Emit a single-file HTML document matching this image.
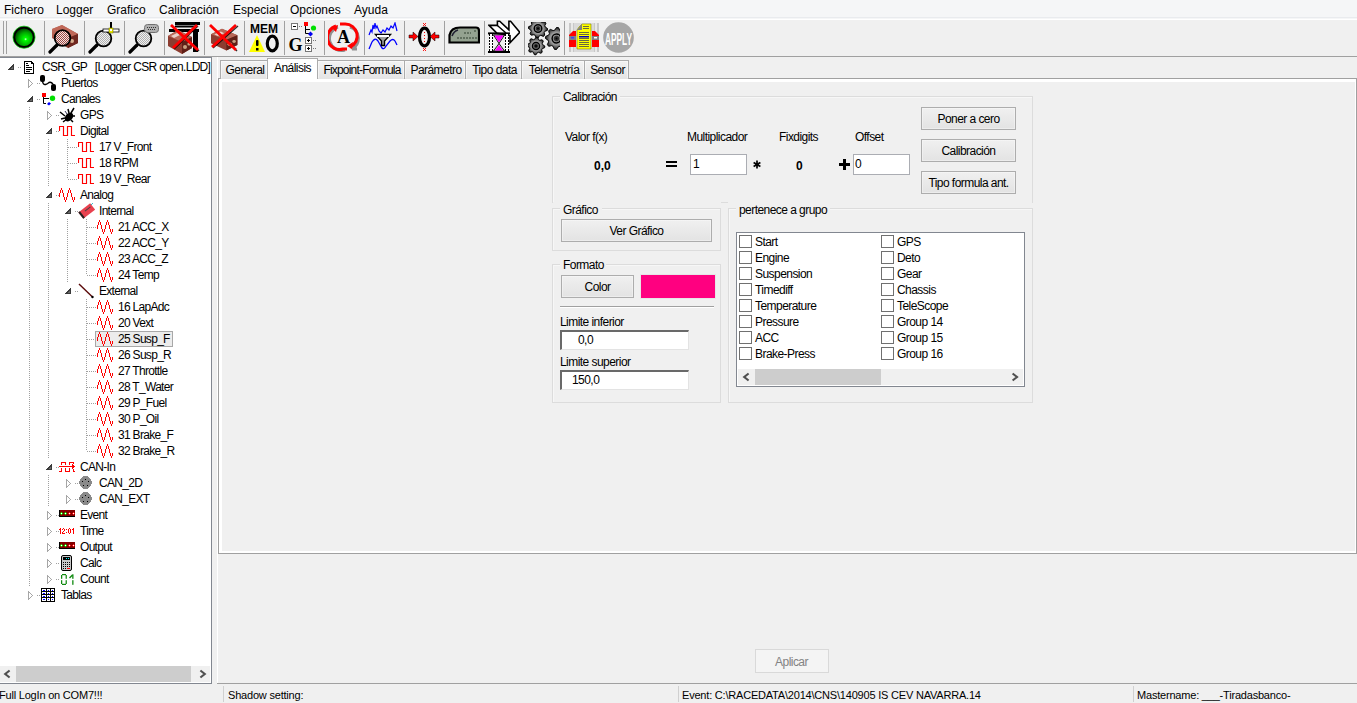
<!DOCTYPE html><html><head><meta charset="utf-8"><style>
html,body{margin:0;padding:0;}
body{width:1357px;height:703px;overflow:hidden;position:relative;background:#f0f0f0;font-family:'Liberation Sans', sans-serif;font-size:11px;color:#000;}
div,svg{position:absolute;box-sizing:border-box;}
.t{white-space:pre;line-height:13px;letter-spacing:-0.2px;}
.tt{white-space:pre;line-height:13px;font-size:12px;letter-spacing:-0.55px;}
.tr{white-space:pre;line-height:13px;font-size:12px;letter-spacing:-0.7px;}
.m{white-space:pre;line-height:14px;font-size:12px;}
.st{white-space:pre;line-height:13px;font-size:11px;letter-spacing:-0.2px;}
</style></head><body>
<div style="left:0px;top:0px;width:1357px;height:19px;background:#f5f6f7;"></div>
<div style="left:0px;top:17px;width:1357px;height:1px;background:#e9ebee;"></div>
<div style="left:0px;top:18px;width:1357px;height:1px;background:#f5f6f7;"></div>
<div style="left:0px;top:19px;width:1357px;height:1px;background:#ffffff;"></div>
<div class="m" style="left:4px;top:3px;">Fichero</div>
<div class="m" style="left:56px;top:3px;">Logger</div>
<div class="m" style="left:107px;top:3px;">Grafico</div>
<div class="m" style="left:159px;top:3px;">Calibración</div>
<div class="m" style="left:233px;top:3px;">Especial</div>
<div class="m" style="left:290px;top:3px;">Opciones</div>
<div class="m" style="left:354px;top:3px;">Ayuda</div>
<div style="left:0px;top:20px;width:1357px;height:36px;background:#f0f0f0;"></div>
<div style="left:0px;top:56px;width:1357px;height:1px;background:#a0a0a0;"></div>
<div style="left:3px;top:21px;width:1px;height:33px;background:#a0a0a0;"></div>
<div style="left:6px;top:21px;width:1px;height:33px;background:#a0a0a0;"></div>
<div style="left:44px;top:21px;width:1px;height:34px;background:#a0a0a0;"></div>
<div style="left:84px;top:21px;width:1px;height:34px;background:#a0a0a0;"></div>
<div style="left:124px;top:21px;width:1px;height:34px;background:#a0a0a0;"></div>
<div style="left:164px;top:21px;width:1px;height:34px;background:#a0a0a0;"></div>
<div style="left:204px;top:21px;width:1px;height:34px;background:#a0a0a0;"></div>
<div style="left:244px;top:21px;width:1px;height:34px;background:#a0a0a0;"></div>
<div style="left:284px;top:21px;width:1px;height:34px;background:#a0a0a0;"></div>
<div style="left:324px;top:21px;width:1px;height:34px;background:#a0a0a0;"></div>
<div style="left:364px;top:21px;width:1px;height:34px;background:#a0a0a0;"></div>
<div style="left:404px;top:21px;width:1px;height:34px;background:#a0a0a0;"></div>
<div style="left:444px;top:21px;width:1px;height:34px;background:#a0a0a0;"></div>
<div style="left:484px;top:21px;width:1px;height:34px;background:#a0a0a0;"></div>
<div style="left:524px;top:21px;width:1px;height:34px;background:#a0a0a0;"></div>
<div style="left:564px;top:21px;width:1px;height:34px;background:#a0a0a0;"></div>
<svg style="left:0;top:0" width="0" height="0"><defs>
<radialGradient id="gled" cx="0.58" cy="0.6" r="0.62"><stop offset="0" stop-color="#e0ffe0"/><stop offset="0.12" stop-color="#00ff00"/><stop offset="0.55" stop-color="#00a800"/><stop offset="1" stop-color="#002800"/></radialGradient>
<pattern id="hatch" width="2" height="2" patternUnits="userSpaceOnUse"><rect width="2" height="2" fill="#f0f0f0"/><rect width="1" height="1" fill="#b0b0b0"/><rect x="1" y="1" width="1" height="1" fill="#b0b0b0"/></pattern>
<pattern id="hatchb" width="2" height="2" patternUnits="userSpaceOnUse"><rect width="2" height="2" fill="#f0e8e8"/><rect width="1" height="1" fill="#a04840"/><rect x="1" y="1" width="1" height="1" fill="#a04840"/></pattern>
<linearGradient id="brown" x1="0" y1="0" x2="1" y2="1"><stop offset="0" stop-color="#c87868"/><stop offset="0.5" stop-color="#a04838"/><stop offset="1" stop-color="#602018"/></linearGradient>
<radialGradient id="gear" cx="0.5" cy="0.5" r="0.5"><stop offset="0.2" stop-color="#303030"/><stop offset="0.35" stop-color="#c0c0c0"/><stop offset="0.6" stop-color="#909090"/><stop offset="1" stop-color="#202020"/></radialGradient>
</defs></svg>
<svg style="left:8px;top:22px" width="32" height="34" viewBox="0 0 32 34"><circle cx="16" cy="15.2" r="9.9" fill="url(#gled)" stroke="#000" stroke-width="2.2"/><circle cx="16" cy="15.2" r="11.1" fill="none" stroke="#00d000" stroke-width="0.7"/></svg>
<svg style="left:48px;top:22px" width="32" height="34" viewBox="0 0 32 34"><path d="M4 7 L14 3 L30 12 L30 21 L20 26 L4 16 Z" fill="url(#brown)"/><path d="M4 7 L14 3 L30 12 L20 16 Z" fill="#c06858"/><path d="M20 16 L30 12 L30 21 L20 26 Z" fill="#702820"/><circle cx="24" cy="19" r="2" fill="#d8b090"/><path d="M2 30 L9 23" stroke="#000" stroke-width="3.2" stroke-linecap="round"/><circle cx="14.5" cy="16" r="7.8" fill="url(#hatchb)" stroke="#000" stroke-width="1.8"/></svg>
<svg style="left:88px;top:22px" width="32" height="34" viewBox="0 0 32 34"><path d="M2 30 L9 23" stroke="#000" stroke-width="3.2" stroke-linecap="round"/><circle cx="15.5" cy="16.5" r="7.8" fill="url(#hatch)" stroke="#000" stroke-width="1.8"/><rect x="22" y="-1" width="2" height="10" fill="#000"/><rect x="15" y="7" width="16" height="3" fill="#fff" stroke="#000" stroke-width="0.8"/><rect x="21" y="6" width="4" height="5" fill="#e8e800" stroke="#808000" stroke-width="0.6"/><rect x="22" y="7" width="2" height="2" fill="#fff"/></svg>
<svg style="left:128px;top:22px" width="32" height="34" viewBox="0 0 32 34"><path d="M2 30 L9 23" stroke="#000" stroke-width="3.2" stroke-linecap="round"/><circle cx="15.5" cy="16.5" r="7.8" fill="url(#hatch)" stroke="#000" stroke-width="1.8"/><rect x="16.5" y="2.5" width="14" height="8" rx="3" fill="#b0b0b0" stroke="#707070"/><g fill="#333"><rect x="19" y="5" width="1" height="1"/><rect x="21" y="5" width="1" height="1"/><rect x="23" y="5" width="1" height="1"/><rect x="25" y="5" width="1" height="1"/><rect x="27" y="5" width="1" height="1"/><rect x="20" y="7" width="1" height="1"/><rect x="22" y="7" width="1" height="1"/><rect x="24" y="7" width="1" height="1"/><rect x="26" y="7" width="1" height="1"/></g></svg>
<svg style="left:168px;top:22px" width="32" height="34" viewBox="0 0 32 34"><rect x="7" y="-1" width="25" height="4" fill="#000"/><rect x="7" y="3.5" width="22" height="2" fill="#000"/><rect x="1" y="7" width="30" height="3" fill="#000"/><rect x="25" y="7" width="5" height="23" fill="#000"/><g transform="translate(0 6) scale(1.0)"><path d="M0 8 L10 2 L24 9 L24 20 L14 26 L0 18 Z" fill="#8c3c30"/><path d="M0 8 L10 2 L24 9 L14 14 Z" fill="#b86858"/><path d="M14 14 L24 9 L24 20 L14 26 Z" fill="#602018"/><path d="M3 8 L9 5 L12 7 L6 10 Z" fill="#e8d0c8"/><circle cx="17" cy="19" r="2" fill="#c8a080"/><circle cx="21" cy="16" r="1.6" fill="#c8a080"/></g><path d="M4 4 L31 29 M30 4 L6 27" stroke="#000" stroke-width="1.5" opacity="0.8"/><path d="M3 3 L30 28 M29 3 L5 26" stroke="#ff0000" stroke-width="2.8"/></svg>
<svg style="left:208px;top:22px" width="32" height="34" viewBox="0 0 32 34"><g transform="translate(0 -1.5) scale(1 0.82)"><g transform="translate(3 8) scale(1.1)"><path d="M0 8 L10 2 L24 9 L24 20 L14 26 L0 18 Z" fill="#8c3c30"/><path d="M0 8 L10 2 L24 9 L14 14 Z" fill="#b86858"/><path d="M14 14 L24 9 L24 20 L14 26 Z" fill="#602018"/><path d="M3 8 L9 5 L12 7 L6 10 Z" fill="#e8d0c8"/><circle cx="17" cy="19" r="2" fill="#c8a080"/><circle cx="21" cy="16" r="1.6" fill="#c8a080"/></g></g><path d="M3 4 L29 29 M30 4 L5 26" stroke="#000" stroke-width="1.5" opacity="0.8"/><path d="M2 3 L28 28 M28 3 L4 25" stroke="#ff0000" stroke-width="2.8"/></svg>
<svg style="left:248px;top:22px" width="32" height="34" viewBox="0 0 32 34"><text x="16" y="11" font-family="Liberation Sans" font-weight="bold" font-size="13.5" text-anchor="middle" textLength="28" lengthAdjust="spacingAndGlyphs">MEM</text><path d="M9 13 L17 30 L1 30 Z" fill="#ffff00"/><rect x="8" y="18" width="2.5" height="6" rx="1" fill="#000"/><rect x="8" y="26" width="2.5" height="2.5" fill="#000"/><ellipse cx="24.3" cy="21.5" rx="5" ry="7.3" fill="none" stroke="#000" stroke-width="3.2"/></svg>
<svg style="left:288px;top:22px" width="32" height="34" viewBox="0 0 32 34"><rect x="3.5" y="1.5" width="6" height="6" fill="#fff" stroke="#777"/><rect x="5" y="4" width="3" height="1" fill="#000"/><g fill="#777"><rect x="11" y="4" width="1" height="1"/><rect x="13" y="4" width="1" height="1"/></g><rect x="16" y="0" width="4" height="4" fill="#f00"/><path d="M17.5 4 V11.5 H22 M17.5 7.5 H22" stroke="#000" fill="none"/><circle cx="25.5" cy="6" r="2.6" fill="#00e000"/><path d="M20 12 L22.5 9.5 L25 12 L22.5 14.5 Z" fill="#0000f0"/><text x="0.5" y="29" font-family="Liberation Serif" font-weight="bold" font-size="19" textLength="14" lengthAdjust="spacingAndGlyphs">G</text><rect x="17.5" y="15.5" width="6" height="6" fill="#fff" stroke="#777"/><rect x="19" y="18" width="3" height="1" fill="#000"/><rect x="20" y="17" width="1" height="3" fill="#000"/><rect x="17.5" y="23.5" width="6" height="6" fill="#fff" stroke="#777"/><rect x="19" y="26" width="3" height="1" fill="#000"/><rect x="20" y="25" width="1" height="3" fill="#000"/><g fill="#777"><rect x="25" y="18" width="1" height="1"/><rect x="27" y="18" width="1" height="1"/><rect x="25" y="26" width="1" height="1"/><rect x="27" y="26" width="1" height="1"/></g></svg>
<svg style="left:328px;top:22px" width="32" height="34" viewBox="0 0 32 34"><path d="M10 5 A12 12 0 0 0 17 28" fill="none" stroke="#909090" stroke-width="3"/><path d="M22 5 A12 12 0 0 1 24 27 L29 27" fill="none" stroke="#909090" stroke-width="3"/><path d="M8 4 A12 12 0 0 0 15 27 L19 27" fill="none" stroke="#ff0000" stroke-width="3"/><path d="M3 5 L10 3 L8 10 Z" fill="#ff0000"/><path d="M12 2 L17 2 A12 12 0 0 1 22 25" fill="none" stroke="#ff0000" stroke-width="3"/><path d="M19 24 L24 27 L25 20 Z" fill="#ff0000"/><text x="15.5" y="21" font-family="Liberation Serif" font-weight="bold" font-size="18" text-anchor="middle">A</text></svg>
<svg style="left:368px;top:22px" width="32" height="34" viewBox="0 0 32 34"><path d="M1 13 L3 8 L4 10 L5 3 L6 7 L7 1 L8 6 L9 4 L11 9 L13 11 L15 8 L17 10 L19 6 L21 8 L23 4 L25 6 L27 1 L29 9" fill="none" stroke="#0000ff" stroke-width="1.2"/><path d="M1 27 L4 20 Q7 15 10 19 L14 26 Q16 28 18 24 L22 19 Q25 16 27 19 L29 23" fill="none" stroke="#0000ff" stroke-width="1.3"/><path d="M7.5 12.5 H22.5 L16.5 19 V23.5 H13.5 V19 Z" fill="#a0a0a0" stroke="#000" stroke-width="1.4"/><rect x="9" y="13" width="12" height="2" fill="#fff"/></svg>
<svg style="left:408px;top:22px" width="32" height="34" viewBox="0 0 32 34"><ellipse cx="16.5" cy="15" rx="5" ry="8.8" fill="none" stroke="#000" stroke-width="3.2"/><g fill="#ff0000"><rect x="16" y="10" width="1" height="1"/><rect x="16" y="13" width="1" height="1"/><rect x="16" y="16" width="1" height="1"/><rect x="16" y="19" width="1" height="1"/><path d="M15 1 L18 4 M18 1 L15 4 M15 26 L18 29 M18 26 L15 29" stroke="#ff0000" stroke-width="0.9"/><path d="M1 13 H5 V10 L10 14.5 L5 19 V16 H1 Z"/><path d="M31 13 H27 V10 L22 14.5 L27 19 V16 H31 Z"/></g><path d="M1 13 H5 V10 L10 14.5 L5 19 V16 H1 Z M31 13 H27 V10 L22 14.5 L27 19 V16 H31 Z" fill="none" stroke="#000" stroke-width="0.5"/></svg>
<svg style="left:448px;top:22px" width="32" height="34" viewBox="0 0 32 34"><path d="M1.5 20.5 V13 Q3 5.5 12 5.5 H28 Q31 5.5 31 9 V20.5 Z" fill="#94a290" stroke="#000" stroke-width="2.2"/><path d="M4 14 Q6 9 10 8" fill="none" stroke="#223" stroke-width="1.6"/><path d="M9 16 H29 M16 11 H23 M26 9 H29" stroke="#50604f" stroke-width="1.6" stroke-dasharray="2 1"/></svg>
<svg style="left:488px;top:20px" width="32" height="36" viewBox="0 0 32 36"><path d="M1.1 5.4 H9.4 V1.2 H11.7 L20.9 9.8 V1.2 H22.6 L31.8 12.2 L22 22.8 V15.7 L9 13.3 Z" fill="#fff" stroke="#000" stroke-width="1.6" stroke-linejoin="miter"/><path d="M9.4 5.4 L18 13" stroke="#000" stroke-width="1.4"/><rect x="0" y="12.4" width="22" height="2" fill="#000"/><rect x="0" y="31" width="22" height="2" fill="#000"/><rect x="1" y="14" width="4" height="17" fill="#fff"/><rect x="17" y="14" width="4" height="17" fill="#fff"/><path d="M1.5 14 V31 M4.5 14 V31 M17.5 14 V31 M20.5 14 V31" stroke="#000" stroke-width="1" stroke-dasharray="2 1"/><path d="M5.5 15 H16.5 L11 23.5 L16.5 31 H5.5 L11 23.5 Z" fill="#d8d8d8" stroke="#000" stroke-width="0.9"/><path d="M6.5 15.5 H15.5 L11 22.5 Z" fill="#ff00ff"/><path d="M11 25 L15 30.5 H7 Z" fill="#ff00ff"/></svg>
<svg style="left:528px;top:22px" width="32" height="34" viewBox="0 0 32 34"><polygon points="19.5,6.5 19.3,8.4 16.8,9.3 16.2,10.6 16.7,13.2 15.3,14.4 12.8,13.3 11.4,13.8 10.0,16.0 8.1,15.8 7.2,13.3 5.9,12.7 3.3,13.2 2.1,11.8 3.2,9.3 2.7,7.9 0.5,6.5 0.7,4.6 3.2,3.7 3.8,2.4 3.3,-0.2 4.7,-1.4 7.2,-0.3 8.6,-0.8 10.0,-3.0 11.9,-2.8 12.8,-0.3 14.1,0.3 16.7,-0.2 17.9,1.2 16.8,3.7 17.3,5.1" fill="url(#gear)" stroke="#000" stroke-width="1"/><circle cx="10" cy="6.5" r="3.8" fill="none" stroke="#000" stroke-width="1.5"/><circle cx="10" cy="6.5" r="1" fill="#000"/><polygon points="16.8,24.0 16.6,25.7 14.3,26.6 13.7,27.8 14.2,30.2 12.9,31.3 10.6,30.3 9.3,30.7 8.0,32.8 6.3,32.6 5.4,30.3 4.2,29.7 1.8,30.2 0.7,28.9 1.7,26.6 1.3,25.3 -0.8,24.0 -0.6,22.3 1.7,21.4 2.3,20.2 1.8,17.8 3.1,16.7 5.4,17.7 6.7,17.3 8.0,15.2 9.7,15.4 10.6,17.7 11.8,18.3 14.2,17.8 15.3,19.1 14.3,21.4 14.7,22.7" fill="url(#gear)" stroke="#000" stroke-width="1"/><circle cx="8" cy="24" r="3.5" fill="none" stroke="#000" stroke-width="1.5"/><circle cx="8" cy="24" r="1" fill="#000"/><polygon points="39.5,16.5 39.3,18.6 36.4,19.8 35.6,21.3 36.3,24.3 34.6,25.6 31.8,24.4 30.2,24.9 28.5,27.5 26.4,27.3 25.2,24.4 23.7,23.6 20.7,24.3 19.4,22.6 20.6,19.8 20.1,18.2 17.5,16.5 17.7,14.4 20.6,13.2 21.4,11.7 20.7,8.7 22.4,7.4 25.2,8.6 26.8,8.1 28.5,5.5 30.6,5.7 31.8,8.6 33.3,9.4 36.3,8.7 37.6,10.4 36.4,13.2 36.9,14.8" fill="url(#gear)" stroke="#000" stroke-width="1"/><circle cx="28.5" cy="16.5" r="4.4" fill="none" stroke="#000" stroke-width="1.5"/><circle cx="28.5" cy="16.5" r="1" fill="#000"/></svg>
<svg style="left:568px;top:22px" width="32" height="34" viewBox="0 0 32 34"><rect x="1" y="1" width="30" height="29" fill="#c8c8c8"/><rect x="6" y="1" width="20" height="29" fill="#dadada"/><rect x="3" y="1" width="2" height="29" fill="#e8e8e8"/><rect x="27" y="1" width="2" height="29" fill="#e8e8e8"/><path d="M11 5 L14 2 H23 V27 H9 V8 Z" fill="#ffff00" stroke="#808000" stroke-width="0.6"/><path d="M9 8 L14 2 V8 Z" fill="#808080"/><g fill="#6a6a40"><rect x="15" y="4" width="6" height="1"/><rect x="15" y="6" width="6" height="1"/><rect x="11" y="10" width="10" height="1"/><rect x="11" y="12" width="10" height="1"/><rect x="11" y="16" width="10" height="1"/><rect x="11" y="18" width="10" height="1"/><rect x="11" y="20" width="10" height="1"/><rect x="11" y="22" width="10" height="1"/><rect x="11" y="24" width="10" height="1"/></g><rect x="11" y="14" width="10" height="1.5" fill="#0000c0"/><path d="M1 13 L5 9 H8 V25 H1 Z" fill="#ff0000"/><rect x="1" y="14" width="7" height="4" fill="#808080"/><rect x="3" y="15" width="3" height="1.5" fill="#4040ff"/><path d="M31 13 L27 9 H24 V25 H31 Z" fill="#ff0000"/><rect x="24" y="14" width="7" height="4" fill="#808080"/><rect x="26" y="15" width="3" height="1.5" fill="#fff"/></svg>
<svg style="left:602px;top:22px" width="34" height="34" viewBox="0 0 34 34"><circle cx="16.5" cy="15.5" r="15.3" fill="#a6a6a6"/><text x="16.5" y="22.5" font-family="Liberation Sans" font-weight="bold" font-size="16" fill="#fff" text-anchor="middle" textLength="27" lengthAdjust="spacingAndGlyphs">APPLY</text></svg>
<div style="left:0px;top:57px;width:212px;height:627px;background:#fff;border-top:1px solid #828790;border-right:1px solid #828790;border-bottom:1px solid #828790;"></div>
<div style="left:0;top:0;width:211px;height:683px;overflow:hidden">
<svg style="left:0;top:0" width="212" height="684"><path d="M67.5 139 V155 M67.5 155 V171 M67.5 171 V179 M86.5 219 V235 M86.5 235 V251 M86.5 251 V267 M86.5 267 V275 M86.5 299 V315 M86.5 315 V331 M86.5 331 V347 M86.5 347 V363 M86.5 363 V379 M86.5 379 V395 M86.5 395 V411 M86.5 411 V427 M86.5 427 V443 M86.5 443 V451 M29.5 107 V123 M29.5 123 V139 M29.5 139 V155 M48.5 139 V155 M29.5 155 V171 M48.5 155 V171 M29.5 171 V187 M48.5 171 V187 M29.5 187 V203 M29.5 203 V219 M48.5 203 V219 M29.5 219 V235 M48.5 219 V235 M67.5 219 V235 M29.5 235 V251 M48.5 235 V251 M67.5 235 V251 M29.5 251 V267 M48.5 251 V267 M67.5 251 V267 M29.5 267 V283 M48.5 267 V283 M67.5 267 V283 M29.5 283 V299 M48.5 283 V299 M29.5 299 V315 M48.5 299 V315 M29.5 315 V331 M48.5 315 V331 M29.5 331 V347 M48.5 331 V347 M29.5 347 V363 M48.5 347 V363 M29.5 363 V379 M48.5 363 V379 M29.5 379 V395 M48.5 379 V395 M29.5 395 V411 M48.5 395 V411 M29.5 411 V427 M48.5 411 V427 M29.5 427 V443 M48.5 427 V443 M29.5 443 V459 M48.5 443 V459 M29.5 459 V475 M29.5 475 V491 M48.5 475 V491 M29.5 491 V507 M48.5 491 V507 M29.5 507 V523 M29.5 523 V539 M29.5 539 V555 M29.5 555 V571 M29.5 571 V587" stroke="#a0a0a0" stroke-width="1" stroke-dasharray="1 1" shape-rendering="crispEdges"/></svg>
<svg style="left:0;top:0" width="212" height="684" shape-rendering="crispEdges"><rect x="18" y="67" width="1" height="1" fill="#a0a0a0"/><rect x="20" y="67" width="1" height="1" fill="#a0a0a0"/></svg>
<svg style="left:8px;top:64px" width="7" height="7" shape-rendering="crispEdges"><g fill="#3a3a3a"><rect x="5" y="0" width="1" height="1"/><rect x="4" y="1" width="2" height="1"/><rect x="3" y="2" width="3" height="1"/><rect x="2" y="3" width="4" height="1"/><rect x="1" y="4" width="5" height="1"/><rect x="0" y="5" width="6" height="1"/></g><g fill="#6a6a6a"><rect x="4" y="3" width="1" height="1"/><rect x="3" y="4" width="2" height="1"/></g></svg>
<svg style="left:21px;top:59px" width="16" height="16" viewBox="0 0 16 16" shape-rendering="crispEdges"><path d="M3.5 2.5 H10.5 L12.5 4.5 V14.5 H3.5 Z" fill="#fff" stroke="#000" stroke-width="1"/><path d="M10.5 2.5 V4.5 H12.5" fill="none" stroke="#000"/><rect x="5" y="4" width="2" height="1" fill="#000"/><rect x="5" y="6" width="3" height="1" fill="#000"/><rect x="5" y="8" width="6" height="1" fill="#000"/><rect x="5" y="10" width="6" height="1" fill="#000"/><rect x="5" y="12" width="4" height="1" fill="#000"/></svg>
<div class="tr" style="left:42px;top:61px">CSR_GP   [Logger CSR open.LDD]</div>
<svg style="left:0;top:0" width="212" height="684" shape-rendering="crispEdges"><rect x="37" y="83" width="1" height="1" fill="#a0a0a0"/><rect x="39" y="83" width="1" height="1" fill="#a0a0a0"/></svg>
<svg style="left:27px;top:79px" width="7" height="9" shape-rendering="crispEdges"><g fill="#a6a6a6"><rect x="1" y="0" width="1" height="9"/><rect x="2" y="1" width="1" height="1"/><rect x="2" y="7" width="1" height="1"/><rect x="3" y="2" width="1" height="1"/><rect x="3" y="6" width="1" height="1"/><rect x="4" y="3" width="1" height="1"/><rect x="4" y="5" width="1" height="1"/><rect x="5" y="4" width="1" height="1"/><rect x="5" y="4" width="1" height="1"/></g></svg>
<svg style="left:40px;top:75px" width="17" height="17"><rect x="0" y="0" width="5" height="7" rx="2" fill="#000"/><path d="M2.5 6 Q3 10 5.5 9.5 Q7.5 9 9 7.5 Q11 6.5 13 9" fill="none" stroke="#000" stroke-width="1.4"/><rect x="11" y="9" width="5" height="7" rx="2" fill="#000"/></svg>
<div class="tr" style="left:61px;top:77px">Puertos</div>
<svg style="left:0;top:0" width="212" height="684" shape-rendering="crispEdges"><rect x="37" y="99" width="1" height="1" fill="#a0a0a0"/><rect x="39" y="99" width="1" height="1" fill="#a0a0a0"/></svg>
<svg style="left:27px;top:96px" width="7" height="7" shape-rendering="crispEdges"><g fill="#3a3a3a"><rect x="5" y="0" width="1" height="1"/><rect x="4" y="1" width="2" height="1"/><rect x="3" y="2" width="3" height="1"/><rect x="2" y="3" width="4" height="1"/><rect x="1" y="4" width="5" height="1"/><rect x="0" y="5" width="6" height="1"/></g><g fill="#6a6a6a"><rect x="4" y="3" width="1" height="1"/><rect x="3" y="4" width="2" height="1"/></g></svg>
<svg style="left:40px;top:91px" width="16" height="16"><rect x="2" y="2" width="4" height="4" fill="#f00"/><path d="M3.5 6 V12.5 H6 M3.5 7.5 H9" fill="none" stroke="#000" stroke-width="1"/><circle cx="12.5" cy="7.3" r="2.7" fill="#00e000"/><path d="M7 13 L9 11 L11 12.5 L9 14.5 Z" fill="#0000ff"/></svg>
<div class="tr" style="left:61px;top:93px">Canales</div>
<svg style="left:0;top:0" width="212" height="684" shape-rendering="crispEdges"><rect x="56" y="115" width="1" height="1" fill="#a0a0a0"/><rect x="58" y="115" width="1" height="1" fill="#a0a0a0"/></svg>
<svg style="left:46px;top:111px" width="7" height="9" shape-rendering="crispEdges"><g fill="#a6a6a6"><rect x="1" y="0" width="1" height="9"/><rect x="2" y="1" width="1" height="1"/><rect x="2" y="7" width="1" height="1"/><rect x="3" y="2" width="1" height="1"/><rect x="3" y="6" width="1" height="1"/><rect x="4" y="3" width="1" height="1"/><rect x="4" y="5" width="1" height="1"/><rect x="5" y="4" width="1" height="1"/><rect x="5" y="4" width="1" height="1"/></g></svg>
<svg style="left:59px;top:107px" width="17" height="17"><ellipse cx="10" cy="10" rx="5" ry="3.6" transform="rotate(-50 10 10)" fill="#000"/><path d="M1 5 L6 9 M4 15 L8 12 M2 12 L6 11 M9 2 L10 6 M15 1 L12 6 M14 15 L12 13 M16 9 L13 9" stroke="#000" stroke-width="1.5"/><path d="M6 4 L8 7" stroke="#335" stroke-width="1"/></svg>
<div class="tr" style="left:80px;top:109px">GPS</div>
<svg style="left:0;top:0" width="212" height="684" shape-rendering="crispEdges"><rect x="56" y="131" width="1" height="1" fill="#a0a0a0"/><rect x="58" y="131" width="1" height="1" fill="#a0a0a0"/></svg>
<svg style="left:46px;top:128px" width="7" height="7" shape-rendering="crispEdges"><g fill="#3a3a3a"><rect x="5" y="0" width="1" height="1"/><rect x="4" y="1" width="2" height="1"/><rect x="3" y="2" width="3" height="1"/><rect x="2" y="3" width="4" height="1"/><rect x="1" y="4" width="5" height="1"/><rect x="0" y="5" width="6" height="1"/></g><g fill="#6a6a6a"><rect x="4" y="3" width="1" height="1"/><rect x="3" y="4" width="2" height="1"/></g></svg>
<svg style="left:59px;top:123px" width="17" height="16"><path d="M0.5 8 V3.5 H4.5 V12.5 H8.5 V3.5 H12.5 V12.5 H16" fill="none" stroke="#f00" stroke-width="1.15"/></svg>
<div class="tr" style="left:80px;top:125px">Digital</div>
<svg style="left:0;top:0" width="212" height="684" shape-rendering="crispEdges"><rect x="68" y="147" width="1" height="1" fill="#a0a0a0"/><rect x="70" y="147" width="1" height="1" fill="#a0a0a0"/><rect x="72" y="147" width="1" height="1" fill="#a0a0a0"/><rect x="74" y="147" width="1" height="1" fill="#a0a0a0"/><rect x="76" y="147" width="1" height="1" fill="#a0a0a0"/></svg>
<svg style="left:78px;top:139px" width="17" height="16"><path d="M0.5 8 V3.5 H4.5 V12.5 H8.5 V3.5 H12.5 V12.5 H16" fill="none" stroke="#f00" stroke-width="1.15"/></svg>
<div class="tr" style="left:99px;top:141px">17 V_Front</div>
<svg style="left:0;top:0" width="212" height="684" shape-rendering="crispEdges"><rect x="68" y="163" width="1" height="1" fill="#a0a0a0"/><rect x="70" y="163" width="1" height="1" fill="#a0a0a0"/><rect x="72" y="163" width="1" height="1" fill="#a0a0a0"/><rect x="74" y="163" width="1" height="1" fill="#a0a0a0"/><rect x="76" y="163" width="1" height="1" fill="#a0a0a0"/></svg>
<svg style="left:78px;top:155px" width="17" height="16"><path d="M0.5 8 V3.5 H4.5 V12.5 H8.5 V3.5 H12.5 V12.5 H16" fill="none" stroke="#f00" stroke-width="1.15"/></svg>
<div class="tr" style="left:99px;top:157px">18 RPM</div>
<svg style="left:0;top:0" width="212" height="684" shape-rendering="crispEdges"><rect x="68" y="179" width="1" height="1" fill="#a0a0a0"/><rect x="70" y="179" width="1" height="1" fill="#a0a0a0"/><rect x="72" y="179" width="1" height="1" fill="#a0a0a0"/><rect x="74" y="179" width="1" height="1" fill="#a0a0a0"/><rect x="76" y="179" width="1" height="1" fill="#a0a0a0"/></svg>
<svg style="left:78px;top:171px" width="17" height="16"><path d="M0.5 8 V3.5 H4.5 V12.5 H8.5 V3.5 H12.5 V12.5 H16" fill="none" stroke="#f00" stroke-width="1.15"/></svg>
<div class="tr" style="left:99px;top:173px">19 V_Rear</div>
<svg style="left:0;top:0" width="212" height="684" shape-rendering="crispEdges"><rect x="56" y="195" width="1" height="1" fill="#a0a0a0"/><rect x="58" y="195" width="1" height="1" fill="#a0a0a0"/></svg>
<svg style="left:46px;top:192px" width="7" height="7" shape-rendering="crispEdges"><g fill="#3a3a3a"><rect x="5" y="0" width="1" height="1"/><rect x="4" y="1" width="2" height="1"/><rect x="3" y="2" width="3" height="1"/><rect x="2" y="3" width="4" height="1"/><rect x="1" y="4" width="5" height="1"/><rect x="0" y="5" width="6" height="1"/></g><g fill="#6a6a6a"><rect x="4" y="3" width="1" height="1"/><rect x="3" y="4" width="2" height="1"/></g></svg>
<svg style="left:59px;top:187px" width="16" height="16" shape-rendering="crispEdges"><g fill="#f00"><rect x="0" y="6" width="1" height="4"/><rect x="1" y="3" width="1" height="3"/><rect x="2" y="1" width="1" height="2"/><rect x="3" y="3" width="1" height="3"/><rect x="4" y="6" width="1" height="4"/><rect x="5" y="10" width="1" height="3"/><rect x="6" y="13" width="1" height="2"/><rect x="7" y="10" width="1" height="3"/><rect x="8" y="6" width="1" height="4"/><rect x="9" y="3" width="1" height="3"/><rect x="10" y="1" width="1" height="2"/><rect x="11" y="3" width="1" height="3"/><rect x="12" y="6" width="1" height="4"/><rect x="13" y="10" width="1" height="3"/><rect x="14" y="13" width="1" height="2"/><rect x="15" y="10" width="1" height="3"/></g></svg>
<div class="tr" style="left:80px;top:189px">Analog</div>
<svg style="left:0;top:0" width="212" height="684" shape-rendering="crispEdges"><rect x="75" y="211" width="1" height="1" fill="#a0a0a0"/><rect x="77" y="211" width="1" height="1" fill="#a0a0a0"/></svg>
<svg style="left:65px;top:208px" width="7" height="7" shape-rendering="crispEdges"><g fill="#3a3a3a"><rect x="5" y="0" width="1" height="1"/><rect x="4" y="1" width="2" height="1"/><rect x="3" y="2" width="3" height="1"/><rect x="2" y="3" width="4" height="1"/><rect x="1" y="4" width="5" height="1"/><rect x="0" y="5" width="6" height="1"/></g><g fill="#6a6a6a"><rect x="4" y="3" width="1" height="1"/><rect x="3" y="4" width="2" height="1"/></g></svg>
<svg style="left:78px;top:203px" width="17" height="17"><g transform="rotate(-38 8 8)"><rect x="1" y="4.5" width="15" height="8" fill="#e8414f"/><rect x="1" y="4.5" width="2" height="8" fill="#222"/><rect x="7" y="7" width="7" height="1" fill="#444"/></g><path d="M13 2 L15 0" stroke="#38b8c8" stroke-width="1"/></svg>
<div class="tr" style="left:99px;top:205px">Internal</div>
<svg style="left:0;top:0" width="212" height="684" shape-rendering="crispEdges"><rect x="87" y="227" width="1" height="1" fill="#a0a0a0"/><rect x="89" y="227" width="1" height="1" fill="#a0a0a0"/><rect x="91" y="227" width="1" height="1" fill="#a0a0a0"/><rect x="93" y="227" width="1" height="1" fill="#a0a0a0"/><rect x="95" y="227" width="1" height="1" fill="#a0a0a0"/></svg>
<svg style="left:97px;top:219px" width="16" height="16" shape-rendering="crispEdges"><g fill="#f00"><rect x="0" y="6" width="1" height="4"/><rect x="1" y="3" width="1" height="3"/><rect x="2" y="1" width="1" height="2"/><rect x="3" y="3" width="1" height="3"/><rect x="4" y="6" width="1" height="4"/><rect x="5" y="10" width="1" height="3"/><rect x="6" y="13" width="1" height="2"/><rect x="7" y="10" width="1" height="3"/><rect x="8" y="6" width="1" height="4"/><rect x="9" y="3" width="1" height="3"/><rect x="10" y="1" width="1" height="2"/><rect x="11" y="3" width="1" height="3"/><rect x="12" y="6" width="1" height="4"/><rect x="13" y="10" width="1" height="3"/><rect x="14" y="13" width="1" height="2"/><rect x="15" y="10" width="1" height="3"/></g></svg>
<div class="tr" style="left:118px;top:221px">21 ACC_X</div>
<svg style="left:0;top:0" width="212" height="684" shape-rendering="crispEdges"><rect x="87" y="243" width="1" height="1" fill="#a0a0a0"/><rect x="89" y="243" width="1" height="1" fill="#a0a0a0"/><rect x="91" y="243" width="1" height="1" fill="#a0a0a0"/><rect x="93" y="243" width="1" height="1" fill="#a0a0a0"/><rect x="95" y="243" width="1" height="1" fill="#a0a0a0"/></svg>
<svg style="left:97px;top:235px" width="16" height="16" shape-rendering="crispEdges"><g fill="#f00"><rect x="0" y="6" width="1" height="4"/><rect x="1" y="3" width="1" height="3"/><rect x="2" y="1" width="1" height="2"/><rect x="3" y="3" width="1" height="3"/><rect x="4" y="6" width="1" height="4"/><rect x="5" y="10" width="1" height="3"/><rect x="6" y="13" width="1" height="2"/><rect x="7" y="10" width="1" height="3"/><rect x="8" y="6" width="1" height="4"/><rect x="9" y="3" width="1" height="3"/><rect x="10" y="1" width="1" height="2"/><rect x="11" y="3" width="1" height="3"/><rect x="12" y="6" width="1" height="4"/><rect x="13" y="10" width="1" height="3"/><rect x="14" y="13" width="1" height="2"/><rect x="15" y="10" width="1" height="3"/></g></svg>
<div class="tr" style="left:118px;top:237px">22 ACC_Y</div>
<svg style="left:0;top:0" width="212" height="684" shape-rendering="crispEdges"><rect x="87" y="259" width="1" height="1" fill="#a0a0a0"/><rect x="89" y="259" width="1" height="1" fill="#a0a0a0"/><rect x="91" y="259" width="1" height="1" fill="#a0a0a0"/><rect x="93" y="259" width="1" height="1" fill="#a0a0a0"/><rect x="95" y="259" width="1" height="1" fill="#a0a0a0"/></svg>
<svg style="left:97px;top:251px" width="16" height="16" shape-rendering="crispEdges"><g fill="#f00"><rect x="0" y="6" width="1" height="4"/><rect x="1" y="3" width="1" height="3"/><rect x="2" y="1" width="1" height="2"/><rect x="3" y="3" width="1" height="3"/><rect x="4" y="6" width="1" height="4"/><rect x="5" y="10" width="1" height="3"/><rect x="6" y="13" width="1" height="2"/><rect x="7" y="10" width="1" height="3"/><rect x="8" y="6" width="1" height="4"/><rect x="9" y="3" width="1" height="3"/><rect x="10" y="1" width="1" height="2"/><rect x="11" y="3" width="1" height="3"/><rect x="12" y="6" width="1" height="4"/><rect x="13" y="10" width="1" height="3"/><rect x="14" y="13" width="1" height="2"/><rect x="15" y="10" width="1" height="3"/></g></svg>
<div class="tr" style="left:118px;top:253px">23 ACC_Z</div>
<svg style="left:0;top:0" width="212" height="684" shape-rendering="crispEdges"><rect x="87" y="275" width="1" height="1" fill="#a0a0a0"/><rect x="89" y="275" width="1" height="1" fill="#a0a0a0"/><rect x="91" y="275" width="1" height="1" fill="#a0a0a0"/><rect x="93" y="275" width="1" height="1" fill="#a0a0a0"/><rect x="95" y="275" width="1" height="1" fill="#a0a0a0"/></svg>
<svg style="left:97px;top:267px" width="16" height="16" shape-rendering="crispEdges"><g fill="#f00"><rect x="0" y="6" width="1" height="4"/><rect x="1" y="3" width="1" height="3"/><rect x="2" y="1" width="1" height="2"/><rect x="3" y="3" width="1" height="3"/><rect x="4" y="6" width="1" height="4"/><rect x="5" y="10" width="1" height="3"/><rect x="6" y="13" width="1" height="2"/><rect x="7" y="10" width="1" height="3"/><rect x="8" y="6" width="1" height="4"/><rect x="9" y="3" width="1" height="3"/><rect x="10" y="1" width="1" height="2"/><rect x="11" y="3" width="1" height="3"/><rect x="12" y="6" width="1" height="4"/><rect x="13" y="10" width="1" height="3"/><rect x="14" y="13" width="1" height="2"/><rect x="15" y="10" width="1" height="3"/></g></svg>
<div class="tr" style="left:118px;top:269px">24 Temp</div>
<svg style="left:0;top:0" width="212" height="684" shape-rendering="crispEdges"><rect x="75" y="291" width="1" height="1" fill="#a0a0a0"/><rect x="77" y="291" width="1" height="1" fill="#a0a0a0"/></svg>
<svg style="left:65px;top:288px" width="7" height="7" shape-rendering="crispEdges"><g fill="#3a3a3a"><rect x="5" y="0" width="1" height="1"/><rect x="4" y="1" width="2" height="1"/><rect x="3" y="2" width="3" height="1"/><rect x="2" y="3" width="4" height="1"/><rect x="1" y="4" width="5" height="1"/><rect x="0" y="5" width="6" height="1"/></g><g fill="#6a6a6a"><rect x="4" y="3" width="1" height="1"/><rect x="3" y="4" width="2" height="1"/></g></svg>
<svg style="left:78px;top:283px" width="17" height="17"><path d="M1 1 L14.5 14" stroke="#5a0a0a" stroke-width="1.4"/><circle cx="14.5" cy="14" r="1.2" fill="#000"/></svg>
<div class="tr" style="left:99px;top:285px">External</div>
<svg style="left:0;top:0" width="212" height="684" shape-rendering="crispEdges"><rect x="87" y="307" width="1" height="1" fill="#a0a0a0"/><rect x="89" y="307" width="1" height="1" fill="#a0a0a0"/><rect x="91" y="307" width="1" height="1" fill="#a0a0a0"/><rect x="93" y="307" width="1" height="1" fill="#a0a0a0"/><rect x="95" y="307" width="1" height="1" fill="#a0a0a0"/></svg>
<svg style="left:97px;top:299px" width="16" height="16" shape-rendering="crispEdges"><g fill="#f00"><rect x="0" y="6" width="1" height="4"/><rect x="1" y="3" width="1" height="3"/><rect x="2" y="1" width="1" height="2"/><rect x="3" y="3" width="1" height="3"/><rect x="4" y="6" width="1" height="4"/><rect x="5" y="10" width="1" height="3"/><rect x="6" y="13" width="1" height="2"/><rect x="7" y="10" width="1" height="3"/><rect x="8" y="6" width="1" height="4"/><rect x="9" y="3" width="1" height="3"/><rect x="10" y="1" width="1" height="2"/><rect x="11" y="3" width="1" height="3"/><rect x="12" y="6" width="1" height="4"/><rect x="13" y="10" width="1" height="3"/><rect x="14" y="13" width="1" height="2"/><rect x="15" y="10" width="1" height="3"/></g></svg>
<div class="tr" style="left:118px;top:301px">16 LapAdc</div>
<svg style="left:0;top:0" width="212" height="684" shape-rendering="crispEdges"><rect x="87" y="323" width="1" height="1" fill="#a0a0a0"/><rect x="89" y="323" width="1" height="1" fill="#a0a0a0"/><rect x="91" y="323" width="1" height="1" fill="#a0a0a0"/><rect x="93" y="323" width="1" height="1" fill="#a0a0a0"/><rect x="95" y="323" width="1" height="1" fill="#a0a0a0"/></svg>
<svg style="left:97px;top:315px" width="16" height="16" shape-rendering="crispEdges"><g fill="#f00"><rect x="0" y="6" width="1" height="4"/><rect x="1" y="3" width="1" height="3"/><rect x="2" y="1" width="1" height="2"/><rect x="3" y="3" width="1" height="3"/><rect x="4" y="6" width="1" height="4"/><rect x="5" y="10" width="1" height="3"/><rect x="6" y="13" width="1" height="2"/><rect x="7" y="10" width="1" height="3"/><rect x="8" y="6" width="1" height="4"/><rect x="9" y="3" width="1" height="3"/><rect x="10" y="1" width="1" height="2"/><rect x="11" y="3" width="1" height="3"/><rect x="12" y="6" width="1" height="4"/><rect x="13" y="10" width="1" height="3"/><rect x="14" y="13" width="1" height="2"/><rect x="15" y="10" width="1" height="3"/></g></svg>
<div class="tr" style="left:118px;top:317px">20 Vext</div>
<svg style="left:0;top:0" width="212" height="684" shape-rendering="crispEdges"><rect x="87" y="339" width="1" height="1" fill="#a0a0a0"/><rect x="89" y="339" width="1" height="1" fill="#a0a0a0"/><rect x="91" y="339" width="1" height="1" fill="#a0a0a0"/><rect x="93" y="339" width="1" height="1" fill="#a0a0a0"/><rect x="95" y="339" width="1" height="1" fill="#a0a0a0"/></svg>
<div style="left:95px;top:331px;width:78px;height:16px;background:#ececec;border:1px solid #a8a8a8;left:95px"></div>
<svg style="left:97px;top:331px" width="16" height="16" shape-rendering="crispEdges"><g fill="#f00"><rect x="0" y="6" width="1" height="4"/><rect x="1" y="3" width="1" height="3"/><rect x="2" y="1" width="1" height="2"/><rect x="3" y="3" width="1" height="3"/><rect x="4" y="6" width="1" height="4"/><rect x="5" y="10" width="1" height="3"/><rect x="6" y="13" width="1" height="2"/><rect x="7" y="10" width="1" height="3"/><rect x="8" y="6" width="1" height="4"/><rect x="9" y="3" width="1" height="3"/><rect x="10" y="1" width="1" height="2"/><rect x="11" y="3" width="1" height="3"/><rect x="12" y="6" width="1" height="4"/><rect x="13" y="10" width="1" height="3"/><rect x="14" y="13" width="1" height="2"/><rect x="15" y="10" width="1" height="3"/></g></svg>
<div class="tr" style="left:118px;top:333px">25 Susp_F</div>
<svg style="left:0;top:0" width="212" height="684" shape-rendering="crispEdges"><rect x="87" y="355" width="1" height="1" fill="#a0a0a0"/><rect x="89" y="355" width="1" height="1" fill="#a0a0a0"/><rect x="91" y="355" width="1" height="1" fill="#a0a0a0"/><rect x="93" y="355" width="1" height="1" fill="#a0a0a0"/><rect x="95" y="355" width="1" height="1" fill="#a0a0a0"/></svg>
<svg style="left:97px;top:347px" width="16" height="16" shape-rendering="crispEdges"><g fill="#f00"><rect x="0" y="6" width="1" height="4"/><rect x="1" y="3" width="1" height="3"/><rect x="2" y="1" width="1" height="2"/><rect x="3" y="3" width="1" height="3"/><rect x="4" y="6" width="1" height="4"/><rect x="5" y="10" width="1" height="3"/><rect x="6" y="13" width="1" height="2"/><rect x="7" y="10" width="1" height="3"/><rect x="8" y="6" width="1" height="4"/><rect x="9" y="3" width="1" height="3"/><rect x="10" y="1" width="1" height="2"/><rect x="11" y="3" width="1" height="3"/><rect x="12" y="6" width="1" height="4"/><rect x="13" y="10" width="1" height="3"/><rect x="14" y="13" width="1" height="2"/><rect x="15" y="10" width="1" height="3"/></g></svg>
<div class="tr" style="left:118px;top:349px">26 Susp_R</div>
<svg style="left:0;top:0" width="212" height="684" shape-rendering="crispEdges"><rect x="87" y="371" width="1" height="1" fill="#a0a0a0"/><rect x="89" y="371" width="1" height="1" fill="#a0a0a0"/><rect x="91" y="371" width="1" height="1" fill="#a0a0a0"/><rect x="93" y="371" width="1" height="1" fill="#a0a0a0"/><rect x="95" y="371" width="1" height="1" fill="#a0a0a0"/></svg>
<svg style="left:97px;top:363px" width="16" height="16" shape-rendering="crispEdges"><g fill="#f00"><rect x="0" y="6" width="1" height="4"/><rect x="1" y="3" width="1" height="3"/><rect x="2" y="1" width="1" height="2"/><rect x="3" y="3" width="1" height="3"/><rect x="4" y="6" width="1" height="4"/><rect x="5" y="10" width="1" height="3"/><rect x="6" y="13" width="1" height="2"/><rect x="7" y="10" width="1" height="3"/><rect x="8" y="6" width="1" height="4"/><rect x="9" y="3" width="1" height="3"/><rect x="10" y="1" width="1" height="2"/><rect x="11" y="3" width="1" height="3"/><rect x="12" y="6" width="1" height="4"/><rect x="13" y="10" width="1" height="3"/><rect x="14" y="13" width="1" height="2"/><rect x="15" y="10" width="1" height="3"/></g></svg>
<div class="tr" style="left:118px;top:365px">27 Throttle</div>
<svg style="left:0;top:0" width="212" height="684" shape-rendering="crispEdges"><rect x="87" y="387" width="1" height="1" fill="#a0a0a0"/><rect x="89" y="387" width="1" height="1" fill="#a0a0a0"/><rect x="91" y="387" width="1" height="1" fill="#a0a0a0"/><rect x="93" y="387" width="1" height="1" fill="#a0a0a0"/><rect x="95" y="387" width="1" height="1" fill="#a0a0a0"/></svg>
<svg style="left:97px;top:379px" width="16" height="16" shape-rendering="crispEdges"><g fill="#f00"><rect x="0" y="6" width="1" height="4"/><rect x="1" y="3" width="1" height="3"/><rect x="2" y="1" width="1" height="2"/><rect x="3" y="3" width="1" height="3"/><rect x="4" y="6" width="1" height="4"/><rect x="5" y="10" width="1" height="3"/><rect x="6" y="13" width="1" height="2"/><rect x="7" y="10" width="1" height="3"/><rect x="8" y="6" width="1" height="4"/><rect x="9" y="3" width="1" height="3"/><rect x="10" y="1" width="1" height="2"/><rect x="11" y="3" width="1" height="3"/><rect x="12" y="6" width="1" height="4"/><rect x="13" y="10" width="1" height="3"/><rect x="14" y="13" width="1" height="2"/><rect x="15" y="10" width="1" height="3"/></g></svg>
<div class="tr" style="left:118px;top:381px">28 T_Water</div>
<svg style="left:0;top:0" width="212" height="684" shape-rendering="crispEdges"><rect x="87" y="403" width="1" height="1" fill="#a0a0a0"/><rect x="89" y="403" width="1" height="1" fill="#a0a0a0"/><rect x="91" y="403" width="1" height="1" fill="#a0a0a0"/><rect x="93" y="403" width="1" height="1" fill="#a0a0a0"/><rect x="95" y="403" width="1" height="1" fill="#a0a0a0"/></svg>
<svg style="left:97px;top:395px" width="16" height="16" shape-rendering="crispEdges"><g fill="#f00"><rect x="0" y="6" width="1" height="4"/><rect x="1" y="3" width="1" height="3"/><rect x="2" y="1" width="1" height="2"/><rect x="3" y="3" width="1" height="3"/><rect x="4" y="6" width="1" height="4"/><rect x="5" y="10" width="1" height="3"/><rect x="6" y="13" width="1" height="2"/><rect x="7" y="10" width="1" height="3"/><rect x="8" y="6" width="1" height="4"/><rect x="9" y="3" width="1" height="3"/><rect x="10" y="1" width="1" height="2"/><rect x="11" y="3" width="1" height="3"/><rect x="12" y="6" width="1" height="4"/><rect x="13" y="10" width="1" height="3"/><rect x="14" y="13" width="1" height="2"/><rect x="15" y="10" width="1" height="3"/></g></svg>
<div class="tr" style="left:118px;top:397px">29 P_Fuel</div>
<svg style="left:0;top:0" width="212" height="684" shape-rendering="crispEdges"><rect x="87" y="419" width="1" height="1" fill="#a0a0a0"/><rect x="89" y="419" width="1" height="1" fill="#a0a0a0"/><rect x="91" y="419" width="1" height="1" fill="#a0a0a0"/><rect x="93" y="419" width="1" height="1" fill="#a0a0a0"/><rect x="95" y="419" width="1" height="1" fill="#a0a0a0"/></svg>
<svg style="left:97px;top:411px" width="16" height="16" shape-rendering="crispEdges"><g fill="#f00"><rect x="0" y="6" width="1" height="4"/><rect x="1" y="3" width="1" height="3"/><rect x="2" y="1" width="1" height="2"/><rect x="3" y="3" width="1" height="3"/><rect x="4" y="6" width="1" height="4"/><rect x="5" y="10" width="1" height="3"/><rect x="6" y="13" width="1" height="2"/><rect x="7" y="10" width="1" height="3"/><rect x="8" y="6" width="1" height="4"/><rect x="9" y="3" width="1" height="3"/><rect x="10" y="1" width="1" height="2"/><rect x="11" y="3" width="1" height="3"/><rect x="12" y="6" width="1" height="4"/><rect x="13" y="10" width="1" height="3"/><rect x="14" y="13" width="1" height="2"/><rect x="15" y="10" width="1" height="3"/></g></svg>
<div class="tr" style="left:118px;top:413px">30 P_Oil</div>
<svg style="left:0;top:0" width="212" height="684" shape-rendering="crispEdges"><rect x="87" y="435" width="1" height="1" fill="#a0a0a0"/><rect x="89" y="435" width="1" height="1" fill="#a0a0a0"/><rect x="91" y="435" width="1" height="1" fill="#a0a0a0"/><rect x="93" y="435" width="1" height="1" fill="#a0a0a0"/><rect x="95" y="435" width="1" height="1" fill="#a0a0a0"/></svg>
<svg style="left:97px;top:427px" width="16" height="16" shape-rendering="crispEdges"><g fill="#f00"><rect x="0" y="6" width="1" height="4"/><rect x="1" y="3" width="1" height="3"/><rect x="2" y="1" width="1" height="2"/><rect x="3" y="3" width="1" height="3"/><rect x="4" y="6" width="1" height="4"/><rect x="5" y="10" width="1" height="3"/><rect x="6" y="13" width="1" height="2"/><rect x="7" y="10" width="1" height="3"/><rect x="8" y="6" width="1" height="4"/><rect x="9" y="3" width="1" height="3"/><rect x="10" y="1" width="1" height="2"/><rect x="11" y="3" width="1" height="3"/><rect x="12" y="6" width="1" height="4"/><rect x="13" y="10" width="1" height="3"/><rect x="14" y="13" width="1" height="2"/><rect x="15" y="10" width="1" height="3"/></g></svg>
<div class="tr" style="left:118px;top:429px">31 Brake_F</div>
<svg style="left:0;top:0" width="212" height="684" shape-rendering="crispEdges"><rect x="87" y="451" width="1" height="1" fill="#a0a0a0"/><rect x="89" y="451" width="1" height="1" fill="#a0a0a0"/><rect x="91" y="451" width="1" height="1" fill="#a0a0a0"/><rect x="93" y="451" width="1" height="1" fill="#a0a0a0"/><rect x="95" y="451" width="1" height="1" fill="#a0a0a0"/></svg>
<svg style="left:97px;top:443px" width="16" height="16" shape-rendering="crispEdges"><g fill="#f00"><rect x="0" y="6" width="1" height="4"/><rect x="1" y="3" width="1" height="3"/><rect x="2" y="1" width="1" height="2"/><rect x="3" y="3" width="1" height="3"/><rect x="4" y="6" width="1" height="4"/><rect x="5" y="10" width="1" height="3"/><rect x="6" y="13" width="1" height="2"/><rect x="7" y="10" width="1" height="3"/><rect x="8" y="6" width="1" height="4"/><rect x="9" y="3" width="1" height="3"/><rect x="10" y="1" width="1" height="2"/><rect x="11" y="3" width="1" height="3"/><rect x="12" y="6" width="1" height="4"/><rect x="13" y="10" width="1" height="3"/><rect x="14" y="13" width="1" height="2"/><rect x="15" y="10" width="1" height="3"/></g></svg>
<div class="tr" style="left:118px;top:445px">32 Brake_R</div>
<svg style="left:0;top:0" width="212" height="684" shape-rendering="crispEdges"><rect x="56" y="467" width="1" height="1" fill="#a0a0a0"/><rect x="58" y="467" width="1" height="1" fill="#a0a0a0"/></svg>
<svg style="left:46px;top:464px" width="7" height="7" shape-rendering="crispEdges"><g fill="#3a3a3a"><rect x="5" y="0" width="1" height="1"/><rect x="4" y="1" width="2" height="1"/><rect x="3" y="2" width="3" height="1"/><rect x="2" y="3" width="4" height="1"/><rect x="1" y="4" width="5" height="1"/><rect x="0" y="5" width="6" height="1"/></g><g fill="#6a6a6a"><rect x="4" y="3" width="1" height="1"/><rect x="3" y="4" width="2" height="1"/></g></svg>
<svg style="left:59px;top:459px" width="17" height="16" shape-rendering="crispEdges"><g fill="#f00"><rect x="2" y="3" width="5" height="1"/><rect x="2" y="3" width="1" height="3"/><rect x="6" y="3" width="1" height="3"/><rect x="10" y="3" width="5" height="1"/><rect x="10" y="3" width="1" height="3"/><rect x="14" y="3" width="1" height="2"/><rect x="0" y="7" width="14" height="1"/><rect x="2" y="9" width="1" height="4"/><rect x="0" y="12" width="3" height="1"/><rect x="6" y="9" width="1" height="4"/><rect x="6" y="12" width="5" height="1"/><rect x="10" y="9" width="1" height="4"/><rect x="14" y="10" width="1" height="3"/><rect x="14" y="12" width="2" height="1"/><path d="M13 4.5 L16 7.5 L13 10.5 Z"/></g></svg>
<div class="tr" style="left:80px;top:461px">CAN-In</div>
<svg style="left:0;top:0" width="212" height="684" shape-rendering="crispEdges"><rect x="75" y="483" width="1" height="1" fill="#a0a0a0"/><rect x="77" y="483" width="1" height="1" fill="#a0a0a0"/></svg>
<svg style="left:65px;top:479px" width="7" height="9" shape-rendering="crispEdges"><g fill="#a6a6a6"><rect x="1" y="0" width="1" height="9"/><rect x="2" y="1" width="1" height="1"/><rect x="2" y="7" width="1" height="1"/><rect x="3" y="2" width="1" height="1"/><rect x="3" y="6" width="1" height="1"/><rect x="4" y="3" width="1" height="1"/><rect x="4" y="5" width="1" height="1"/><rect x="5" y="4" width="1" height="1"/><rect x="5" y="4" width="1" height="1"/></g></svg>
<svg style="left:78px;top:475px" width="15" height="15" shape-rendering="crispEdges"><g fill="#8a8a8a"><rect x="5" y="1" width="5" height="1"/><rect x="4" y="2" width="7" height="1"/><rect x="3" y="3" width="9" height="1"/><rect x="2" y="4" width="11" height="1"/><rect x="2" y="5" width="11" height="1"/><rect x="1" y="6" width="13" height="1"/><rect x="1" y="7" width="13" height="1"/><rect x="1" y="8" width="13" height="1"/><rect x="2" y="9" width="11" height="1"/><rect x="2" y="10" width="11" height="1"/><rect x="3" y="11" width="9" height="1"/><rect x="4" y="12" width="7" height="1"/><rect x="5" y="13" width="5" height="1"/></g><g fill="#000"><rect x="7" y="4" width="1" height="1"/><rect x="4" y="6" width="1" height="1"/><rect x="10" y="6" width="1" height="1"/><rect x="5" y="10" width="1" height="1"/><rect x="9" y="10" width="1" height="1"/></g></svg>
<div class="tr" style="left:99px;top:477px">CAN_2D</div>
<svg style="left:0;top:0" width="212" height="684" shape-rendering="crispEdges"><rect x="75" y="499" width="1" height="1" fill="#a0a0a0"/><rect x="77" y="499" width="1" height="1" fill="#a0a0a0"/></svg>
<svg style="left:65px;top:495px" width="7" height="9" shape-rendering="crispEdges"><g fill="#a6a6a6"><rect x="1" y="0" width="1" height="9"/><rect x="2" y="1" width="1" height="1"/><rect x="2" y="7" width="1" height="1"/><rect x="3" y="2" width="1" height="1"/><rect x="3" y="6" width="1" height="1"/><rect x="4" y="3" width="1" height="1"/><rect x="4" y="5" width="1" height="1"/><rect x="5" y="4" width="1" height="1"/><rect x="5" y="4" width="1" height="1"/></g></svg>
<svg style="left:78px;top:491px" width="15" height="15" shape-rendering="crispEdges"><g fill="#8a8a8a"><rect x="5" y="1" width="5" height="1"/><rect x="4" y="2" width="7" height="1"/><rect x="3" y="3" width="9" height="1"/><rect x="2" y="4" width="11" height="1"/><rect x="2" y="5" width="11" height="1"/><rect x="1" y="6" width="13" height="1"/><rect x="1" y="7" width="13" height="1"/><rect x="1" y="8" width="13" height="1"/><rect x="2" y="9" width="11" height="1"/><rect x="2" y="10" width="11" height="1"/><rect x="3" y="11" width="9" height="1"/><rect x="4" y="12" width="7" height="1"/><rect x="5" y="13" width="5" height="1"/></g><g fill="#000"><rect x="7" y="4" width="1" height="1"/><rect x="4" y="6" width="1" height="1"/><rect x="10" y="6" width="1" height="1"/><rect x="5" y="10" width="1" height="1"/><rect x="9" y="10" width="1" height="1"/></g></svg>
<div class="tr" style="left:99px;top:493px">CAN_EXT</div>
<svg style="left:0;top:0" width="212" height="684" shape-rendering="crispEdges"><rect x="56" y="515" width="1" height="1" fill="#a0a0a0"/><rect x="58" y="515" width="1" height="1" fill="#a0a0a0"/></svg>
<svg style="left:46px;top:511px" width="7" height="9" shape-rendering="crispEdges"><g fill="#a6a6a6"><rect x="1" y="0" width="1" height="9"/><rect x="2" y="1" width="1" height="1"/><rect x="2" y="7" width="1" height="1"/><rect x="3" y="2" width="1" height="1"/><rect x="3" y="6" width="1" height="1"/><rect x="4" y="3" width="1" height="1"/><rect x="4" y="5" width="1" height="1"/><rect x="5" y="4" width="1" height="1"/><rect x="5" y="4" width="1" height="1"/></g></svg>
<svg style="left:59px;top:510px" width="16" height="7" viewBox="0 0 16 7" shape-rendering="crispEdges"><rect x="0" y="0" width="16" height="7" fill="#820000"/><rect x="0" y="0" width="1" height="7" fill="#000"/><rect x="0" y="6" width="16" height="1" fill="#000"/><rect x="1" y="3" width="3" height="1" fill="#00ff00"/><rect x="2" y="2" width="1" height="3" fill="#00ff00"/><rect x="2" y="3" width="1" height="1" fill="#fff"/><rect x="5" y="3" width="3" height="1" fill="#00ff00"/><rect x="6" y="2" width="1" height="3" fill="#00ff00"/><rect x="6" y="3" width="1" height="1" fill="#fff"/><rect x="9" y="3" width="3" height="1" fill="#ff1010"/><rect x="10" y="2" width="1" height="3" fill="#ff1010"/><rect x="10" y="3" width="1" height="1" fill="#fff"/><rect x="13" y="3" width="3" height="1" fill="#ff1010"/><rect x="14" y="2" width="1" height="3" fill="#ff1010"/><rect x="14" y="3" width="1" height="1" fill="#fff"/></svg>
<div class="tr" style="left:80px;top:509px">Event</div>
<svg style="left:0;top:0" width="212" height="684" shape-rendering="crispEdges"><rect x="56" y="531" width="1" height="1" fill="#a0a0a0"/><rect x="58" y="531" width="1" height="1" fill="#a0a0a0"/></svg>
<svg style="left:46px;top:527px" width="7" height="9" shape-rendering="crispEdges"><g fill="#a6a6a6"><rect x="1" y="0" width="1" height="9"/><rect x="2" y="1" width="1" height="1"/><rect x="2" y="7" width="1" height="1"/><rect x="3" y="2" width="1" height="1"/><rect x="3" y="6" width="1" height="1"/><rect x="4" y="3" width="1" height="1"/><rect x="4" y="5" width="1" height="1"/><rect x="5" y="4" width="1" height="1"/><rect x="5" y="4" width="1" height="1"/></g></svg>
<svg style="left:59px;top:528px" width="15" height="6" shape-rendering="crispEdges"><g fill="#f00"><rect x="1" y="0" width="1" height="1"/><rect x="0" y="1" width="1" height="1"/><rect x="1" y="1" width="1" height="1"/><rect x="1" y="2" width="1" height="1"/><rect x="1" y="3" width="1" height="1"/><rect x="1" y="4" width="1" height="1"/><rect x="1" y="5" width="1" height="1"/><rect x="4" y="0" width="1" height="1"/><rect x="3" y="1" width="1" height="1"/><rect x="5" y="1" width="1" height="1"/><rect x="5" y="2" width="1" height="1"/><rect x="4" y="3" width="1" height="1"/><rect x="3" y="4" width="1" height="1"/><rect x="3" y="5" width="1" height="1"/><rect x="4" y="5" width="1" height="1"/><rect x="5" y="5" width="1" height="1"/><rect x="7" y="1" width="1" height="1"/><rect x="7" y="4" width="1" height="1"/><rect x="10" y="0" width="1" height="1"/><rect x="9" y="1" width="1" height="1"/><rect x="11" y="1" width="1" height="1"/><rect x="9" y="2" width="1" height="1"/><rect x="11" y="2" width="1" height="1"/><rect x="9" y="3" width="1" height="1"/><rect x="11" y="3" width="1" height="1"/><rect x="9" y="4" width="1" height="1"/><rect x="11" y="4" width="1" height="1"/><rect x="10" y="5" width="1" height="1"/><rect x="14" y="0" width="1" height="1"/><rect x="13" y="1" width="1" height="1"/><rect x="14" y="1" width="1" height="1"/><rect x="14" y="2" width="1" height="1"/><rect x="14" y="3" width="1" height="1"/><rect x="14" y="4" width="1" height="1"/><rect x="14" y="5" width="1" height="1"/></g></svg>
<div class="tr" style="left:80px;top:525px">Time</div>
<svg style="left:0;top:0" width="212" height="684" shape-rendering="crispEdges"><rect x="56" y="547" width="1" height="1" fill="#a0a0a0"/><rect x="58" y="547" width="1" height="1" fill="#a0a0a0"/></svg>
<svg style="left:46px;top:543px" width="7" height="9" shape-rendering="crispEdges"><g fill="#a6a6a6"><rect x="1" y="0" width="1" height="9"/><rect x="2" y="1" width="1" height="1"/><rect x="2" y="7" width="1" height="1"/><rect x="3" y="2" width="1" height="1"/><rect x="3" y="6" width="1" height="1"/><rect x="4" y="3" width="1" height="1"/><rect x="4" y="5" width="1" height="1"/><rect x="5" y="4" width="1" height="1"/><rect x="5" y="4" width="1" height="1"/></g></svg>
<svg style="left:59px;top:542px" width="16" height="7" viewBox="0 0 16 7" shape-rendering="crispEdges"><rect x="0" y="0" width="16" height="7" fill="#820000"/><rect x="0" y="0" width="1" height="7" fill="#000"/><rect x="0" y="6" width="16" height="1" fill="#000"/><rect x="1" y="3" width="3" height="1" fill="#00ff00"/><rect x="2" y="2" width="1" height="3" fill="#00ff00"/><rect x="2" y="3" width="1" height="1" fill="#fff"/><rect x="5" y="3" width="3" height="1" fill="#00ff00"/><rect x="6" y="2" width="1" height="3" fill="#00ff00"/><rect x="6" y="3" width="1" height="1" fill="#fff"/><rect x="9" y="3" width="3" height="1" fill="#ff1010"/><rect x="10" y="2" width="1" height="3" fill="#ff1010"/><rect x="10" y="3" width="1" height="1" fill="#fff"/><rect x="13" y="3" width="3" height="1" fill="#ff1010"/><rect x="14" y="2" width="1" height="3" fill="#ff1010"/><rect x="14" y="3" width="1" height="1" fill="#fff"/></svg>
<div class="tr" style="left:80px;top:541px">Output</div>
<svg style="left:0;top:0" width="212" height="684" shape-rendering="crispEdges"><rect x="56" y="563" width="1" height="1" fill="#a0a0a0"/><rect x="58" y="563" width="1" height="1" fill="#a0a0a0"/></svg>
<svg style="left:46px;top:559px" width="7" height="9" shape-rendering="crispEdges"><g fill="#a6a6a6"><rect x="1" y="0" width="1" height="9"/><rect x="2" y="1" width="1" height="1"/><rect x="2" y="7" width="1" height="1"/><rect x="3" y="2" width="1" height="1"/><rect x="3" y="6" width="1" height="1"/><rect x="4" y="3" width="1" height="1"/><rect x="4" y="5" width="1" height="1"/><rect x="5" y="4" width="1" height="1"/><rect x="5" y="4" width="1" height="1"/></g></svg>
<svg style="left:61px;top:555px" width="12" height="17"><rect x="0.5" y="0.5" width="10" height="15" rx="1.5" fill="#c8c8c8" stroke="#000"/><rect x="2" y="2" width="7" height="3" fill="#000"/><rect x="5" y="3" width="1" height="1" fill="#0ff"/><rect x="7" y="3" width="1" height="1" fill="#0ff"/><g fill="#000"><rect x="2" y="7" width="1" height="1"/><rect x="4" y="7" width="1" height="1"/><rect x="6" y="7" width="1" height="1"/><rect x="8" y="7" width="1" height="1"/><rect x="2" y="9" width="1" height="1"/><rect x="4" y="9" width="1" height="1"/><rect x="6" y="9" width="1" height="1"/><rect x="8" y="9" width="1" height="1"/><rect x="2" y="11" width="1" height="1"/><rect x="4" y="11" width="1" height="1"/><rect x="6" y="11" width="1" height="1"/><rect x="8" y="11" width="1" height="1"/><rect x="2" y="13" width="1" height="1"/><rect x="4" y="13" width="1" height="1"/></g><rect x="6" y="13" width="3" height="1" fill="#f00"/></svg>
<div class="tr" style="left:80px;top:557px">Calc</div>
<svg style="left:0;top:0" width="212" height="684" shape-rendering="crispEdges"><rect x="56" y="579" width="1" height="1" fill="#a0a0a0"/><rect x="58" y="579" width="1" height="1" fill="#a0a0a0"/></svg>
<svg style="left:46px;top:575px" width="7" height="9" shape-rendering="crispEdges"><g fill="#a6a6a6"><rect x="1" y="0" width="1" height="9"/><rect x="2" y="1" width="1" height="1"/><rect x="2" y="7" width="1" height="1"/><rect x="3" y="2" width="1" height="1"/><rect x="3" y="6" width="1" height="1"/><rect x="4" y="3" width="1" height="1"/><rect x="4" y="5" width="1" height="1"/><rect x="5" y="4" width="1" height="1"/><rect x="5" y="4" width="1" height="1"/></g></svg>
<svg style="left:61px;top:574px" width="14" height="12"><g fill="#108a10"><rect x="1" y="0" width="4" height="1.2"/><rect x="1" y="9.8" width="4" height="1.2"/><rect x="0" y="1" width="1.25" height="3.8"/><rect x="0" y="6.2" width="1.25" height="3.8"/><rect x="4.6" y="1" width="1.25" height="3.8"/><rect x="4.6" y="6.2" width="1.25" height="3.8"/><rect x="11.2" y="0.3" width="1.3" height="4.5"/><rect x="11.2" y="6.2" width="1.3" height="4.6"/><path d="M8 3.6 L11 0.6 L12 1.6 L9 4.6 Z"/></g></svg>
<div class="tr" style="left:80px;top:573px">Count</div>
<svg style="left:0;top:0" width="212" height="684" shape-rendering="crispEdges"><rect x="37" y="595" width="1" height="1" fill="#a0a0a0"/><rect x="39" y="595" width="1" height="1" fill="#a0a0a0"/></svg>
<svg style="left:27px;top:591px" width="7" height="9" shape-rendering="crispEdges"><g fill="#a6a6a6"><rect x="1" y="0" width="1" height="9"/><rect x="2" y="1" width="1" height="1"/><rect x="2" y="7" width="1" height="1"/><rect x="3" y="2" width="1" height="1"/><rect x="3" y="6" width="1" height="1"/><rect x="4" y="3" width="1" height="1"/><rect x="4" y="5" width="1" height="1"/><rect x="5" y="4" width="1" height="1"/><rect x="5" y="4" width="1" height="1"/></g></svg>
<svg style="left:41px;top:588px" width="14" height="14" viewBox="0 0 14 14" shape-rendering="crispEdges"><rect x="0" y="0" width="14" height="14" fill="#000"/><rect x="1" y="1" width="4" height="2" fill="#fff"/><rect x="2" y="2" width="2" height="1" fill="#0000ff"/><rect x="2" y="1.5" width="2" height="0.5" fill="#8080ff"/><rect x="6" y="1" width="3" height="2" fill="#fff"/><rect x="7" y="2" width="1" height="1" fill="#0000ff"/><rect x="7" y="1.5" width="1" height="0.5" fill="#8080ff"/><rect x="10" y="1" width="3" height="2" fill="#fff"/><rect x="11" y="2" width="1" height="1" fill="#0000ff"/><rect x="11" y="1.5" width="1" height="0.5" fill="#8080ff"/><rect x="1" y="4" width="4" height="2" fill="#fff"/><rect x="2" y="5" width="2" height="1" fill="#0000ff"/><rect x="2" y="4.5" width="2" height="0.5" fill="#8080ff"/><rect x="6" y="4" width="3" height="2" fill="#fff"/><rect x="7" y="5" width="1" height="1" fill="#0000ff"/><rect x="7" y="4.5" width="1" height="0.5" fill="#8080ff"/><rect x="10" y="4" width="3" height="2" fill="#fff"/><rect x="11" y="5" width="1" height="1" fill="#0000ff"/><rect x="11" y="4.5" width="1" height="0.5" fill="#8080ff"/><rect x="1" y="7" width="4" height="2" fill="#fff"/><rect x="2" y="8" width="2" height="1" fill="#0000ff"/><rect x="2" y="7.5" width="2" height="0.5" fill="#8080ff"/><rect x="6" y="7" width="3" height="2" fill="#fff"/><rect x="7" y="8" width="1" height="1" fill="#0000ff"/><rect x="7" y="7.5" width="1" height="0.5" fill="#8080ff"/><rect x="10" y="7" width="3" height="2" fill="#fff"/><rect x="11" y="8" width="1" height="1" fill="#0000ff"/><rect x="11" y="7.5" width="1" height="0.5" fill="#8080ff"/><rect x="1" y="10" width="4" height="3" fill="#fff"/><rect x="2" y="11" width="2" height="1" fill="#0000ff"/><rect x="6" y="10" width="3" height="3" fill="#fff"/><rect x="7" y="11" width="1" height="1" fill="#0000ff"/><rect x="10" y="10" width="3" height="3" fill="#fff"/><rect x="11" y="11" width="1" height="1" fill="#0000ff"/></svg>
<div class="tr" style="left:61px;top:589px">Tablas</div>
</div>
<div style="left:0px;top:666px;width:210px;height:16px;background:#f0f0f0;"></div>
<div style="left:16px;top:666px;width:175px;height:16px;background:#cdcdcd;"></div>
<svg style="left:0;top:666px" width="210" height="16"><path d="M9.6 4.5 L5.2 8 L9.6 11.5" fill="none" stroke="#505050" stroke-width="2.1"/><path d="M200.4 4.5 L204.8 8 L200.4 11.5" fill="none" stroke="#505050" stroke-width="2.1"/></svg>
<div style="left:217px;top:57px;width:1140px;height:627px;background:#f0f0f0;border-left:1px solid #fff;"></div>
<div style="left:217px;top:683px;width:1140px;height:1px;background:#a0a0a0;"></div>
<div style="left:218px;top:78px;width:1139px;height:476px;background:#fff;border:1px solid #a0a0a0;"></div>
<div style="left:222px;top:82px;width:1133px;height:469px;background:#f0f0f0;"></div>
<div style="left:220px;top:60px;width:48px;height:19px;background:linear-gradient(#f3f3f3,#e4e4e4);border:1px solid #acacac;border-bottom:none;"></div>
<div style="left:221px;top:61px;width:46px;height:17px;border:1px solid rgba(255,255,255,0.5);border-bottom:none;"></div>
<div class="tt" style="left:221px;top:64px;width:48px;text-align:center;">General</div>
<div style="left:317px;top:60px;width:88px;height:19px;background:linear-gradient(#f3f3f3,#e4e4e4);border:1px solid #acacac;border-bottom:none;"></div>
<div style="left:318px;top:61px;width:86px;height:17px;border:1px solid rgba(255,255,255,0.5);border-bottom:none;"></div>
<div class="tt" style="left:318px;top:64px;width:88px;text-align:center;letter-spacing:-0.8px;">Fixpoint-Formula</div>
<div style="left:404px;top:60px;width:62px;height:19px;background:linear-gradient(#f3f3f3,#e4e4e4);border:1px solid #acacac;border-bottom:none;"></div>
<div style="left:405px;top:61px;width:60px;height:17px;border:1px solid rgba(255,255,255,0.5);border-bottom:none;"></div>
<div class="tt" style="left:405px;top:64px;width:62px;text-align:center;">Parámetro</div>
<div style="left:465px;top:60px;width:57px;height:19px;background:linear-gradient(#f3f3f3,#e4e4e4);border:1px solid #acacac;border-bottom:none;"></div>
<div style="left:466px;top:61px;width:55px;height:17px;border:1px solid rgba(255,255,255,0.5);border-bottom:none;"></div>
<div class="tt" style="left:466px;top:64px;width:57px;text-align:center;">Tipo data</div>
<div style="left:521px;top:60px;width:64px;height:19px;background:linear-gradient(#f3f3f3,#e4e4e4);border:1px solid #acacac;border-bottom:none;"></div>
<div style="left:522px;top:61px;width:62px;height:17px;border:1px solid rgba(255,255,255,0.5);border-bottom:none;"></div>
<div class="tt" style="left:522px;top:64px;width:64px;text-align:center;">Telemetría</div>
<div style="left:584px;top:60px;width:45px;height:19px;background:linear-gradient(#f3f3f3,#e4e4e4);border:1px solid #acacac;border-bottom:none;"></div>
<div style="left:585px;top:61px;width:43px;height:17px;border:1px solid rgba(255,255,255,0.5);border-bottom:none;"></div>
<div class="tt" style="left:585px;top:64px;width:45px;text-align:center;">Sensor</div>
<div style="left:267px;top:58px;width:51px;height:21px;background:#fff;border:1px solid #acacac;border-bottom:none;"></div>
<div class="tt" style="left:267px;top:62px;width:51px;text-align:center">Análisis</div>
<div style="left:552px;top:96px;width:481px;height:107px;border:1px solid #dcdcdc;border-bottom:none;"></div>
<div style="left:553px;top:97px;width:479px;height:105px;border:1px solid rgba(255,255,255,0.45);border-right:none;border-bottom:none;"></div>
<div style="left:560px;top:94px;width:60px;height:5px;background:#f0f0f0;"></div>
<div class="tt" style="left:563px;top:91px;">Calibración</div>
<div style="left:721px;top:202px;width:7px;height:1px;background:#dcdcdc;"></div>
<div class="tt" style="left:565px;top:131px;">Valor f(x)</div>
<div class="tt" style="left:687px;top:131px;">Multiplicador</div>
<div class="tt" style="left:779px;top:131px;">Fixdigits</div>
<div class="tt" style="left:855px;top:131px;">Offset</div>
<div class="tt" style="left:594px;top:160px;font-weight:bold;letter-spacing:0px;">0,0</div>
<div style="left:666px;top:161px;width:11px;height:2px;background:#000;"></div>
<div style="left:666px;top:165px;width:11px;height:2px;background:#000;"></div>
<div style="left:690px;top:154px;width:57px;height:21px;background:#fff;border:1px solid #abadb3;border-top-color:#abadb3;"></div>
<div class="tt" style="left:693px;top:158px;">1</div>
<svg style="left:753px;top:160px" width="8" height="9"><path d="M4 0.5 V8.5 M0.6 2.5 L7.4 6.5 M0.6 6.5 L7.4 2.5" stroke="#000" stroke-width="1.7"/></svg>
<div class="tt" style="left:796px;top:160px;font-weight:bold;letter-spacing:0px;">0</div>
<div style="left:839px;top:163px;width:11px;height:3px;background:#000;"></div>
<div style="left:843px;top:159px;width:3px;height:11px;background:#000;"></div>
<div style="left:853px;top:154px;width:57px;height:21px;background:#fff;border:1px solid #abadb3;border-top-color:#abadb3;"></div>
<div class="tt" style="left:855px;top:158px;">0</div>
<div style="left:921px;top:107px;width:95px;height:23px;background:linear-gradient(#f0f0f0,#e3e3e3);border:1px solid #adadad;"></div>
<div style="left:922px;top:108px;width:93px;height:21px;border:1px solid rgba(255,255,255,0.35);"></div>
<div class="tt" style="left:921px;top:113px;width:95px;text-align:center;">Poner a cero</div>
<div style="left:921px;top:139px;width:95px;height:23px;background:linear-gradient(#f0f0f0,#e3e3e3);border:1px solid #adadad;"></div>
<div style="left:922px;top:140px;width:93px;height:21px;border:1px solid rgba(255,255,255,0.35);"></div>
<div class="tt" style="left:921px;top:145px;width:95px;text-align:center;">Calibración</div>
<div style="left:921px;top:171px;width:95px;height:23px;background:linear-gradient(#f0f0f0,#e3e3e3);border:1px solid #adadad;"></div>
<div style="left:922px;top:172px;width:93px;height:21px;border:1px solid rgba(255,255,255,0.35);"></div>
<div class="tt" style="left:921px;top:177px;width:95px;text-align:center;">Tipo formula ant.</div>
<div style="left:552px;top:208px;width:169px;height:43px;border:1px solid #dcdcdc;"></div>
<div style="left:553px;top:209px;width:167px;height:41px;border:1px solid rgba(255,255,255,0.45);border-right:none;border-bottom:none;"></div>
<div style="left:560px;top:206px;width:42px;height:5px;background:#f0f0f0;"></div>
<div class="tt" style="left:563px;top:204px;">Gráfico</div>
<div style="left:561px;top:219px;width:151px;height:23px;background:linear-gradient(#f0f0f0,#e3e3e3);border:1px solid #adadad;"></div>
<div style="left:562px;top:220px;width:149px;height:21px;border:1px solid rgba(255,255,255,0.35);"></div>
<div class="tt" style="left:561px;top:225px;width:151px;text-align:center;">Ver Gráfico</div>
<div style="left:552px;top:264px;width:169px;height:139px;border:1px solid #dcdcdc;"></div>
<div style="left:553px;top:265px;width:167px;height:137px;border:1px solid rgba(255,255,255,0.45);border-right:none;border-bottom:none;"></div>
<div style="left:560px;top:262px;width:46px;height:5px;background:#f0f0f0;"></div>
<div class="tt" style="left:563px;top:259px;">Formato</div>
<div style="left:561px;top:275px;width:73px;height:23px;background:linear-gradient(#f0f0f0,#e3e3e3);border:1px solid #adadad;"></div>
<div style="left:562px;top:276px;width:71px;height:21px;border:1px solid rgba(255,255,255,0.35);"></div>
<div class="tt" style="left:561px;top:281px;width:73px;text-align:center;">Color</div>
<div style="left:640px;top:274px;width:76px;height:25px;background:#ff0080;border:1px solid #e6e6e6;"></div>
<div style="left:560px;top:306px;width:154px;height:1px;background:#a0a0a0;"></div>
<div style="left:560px;top:307px;width:154px;height:1px;background:#fff;"></div>
<div class="tt" style="left:560px;top:316px;">Limite inferior</div>
<div style="left:560px;top:330px;width:129px;height:20px;background:#fff;border-top:2px solid #696969;border-left:2px solid #696969;border-right:1px solid #e3e3e3;border-bottom:1px solid #e3e3e3;"></div>
<div class="tt" style="left:578px;top:334px;">0,0</div>
<div class="tt" style="left:560px;top:356px;">Limite superior</div>
<div style="left:560px;top:370px;width:129px;height:20px;background:#fff;border-top:2px solid #696969;border-left:2px solid #696969;border-right:1px solid #e3e3e3;border-bottom:1px solid #e3e3e3;"></div>
<div class="tt" style="left:572px;top:374px;">150,0</div>
<div style="left:728px;top:208px;width:305px;height:195px;border:1px solid #dcdcdc;"></div>
<div style="left:729px;top:209px;width:303px;height:193px;border:1px solid rgba(255,255,255,0.45);border-right:none;border-bottom:none;"></div>
<div style="left:736px;top:206px;width:94px;height:5px;background:#f0f0f0;"></div>
<div class="tt" style="left:739px;top:204px;">pertenece a grupo</div>
<div style="left:736px;top:232px;width:289px;height:155px;background:#fff;border:1px solid #828790;"></div>
<div style="left:739px;top:235px;width:13px;height:13px;border:1px solid #707070;background:#fff;"></div>
<div class="tt" style="left:755px;top:236px;">Start</div>
<div style="left:881px;top:235px;width:13px;height:13px;border:1px solid #707070;background:#fff;"></div>
<div class="tt" style="left:897px;top:236px;">GPS</div>
<div style="left:739px;top:251px;width:13px;height:13px;border:1px solid #707070;background:#fff;"></div>
<div class="tt" style="left:755px;top:252px;">Engine</div>
<div style="left:881px;top:251px;width:13px;height:13px;border:1px solid #707070;background:#fff;"></div>
<div class="tt" style="left:897px;top:252px;">Deto</div>
<div style="left:739px;top:267px;width:13px;height:13px;border:1px solid #707070;background:#fff;"></div>
<div class="tt" style="left:755px;top:268px;">Suspension</div>
<div style="left:881px;top:267px;width:13px;height:13px;border:1px solid #707070;background:#fff;"></div>
<div class="tt" style="left:897px;top:268px;">Gear</div>
<div style="left:739px;top:283px;width:13px;height:13px;border:1px solid #707070;background:#fff;"></div>
<div class="tt" style="left:755px;top:284px;">Timediff</div>
<div style="left:881px;top:283px;width:13px;height:13px;border:1px solid #707070;background:#fff;"></div>
<div class="tt" style="left:897px;top:284px;">Chassis</div>
<div style="left:739px;top:299px;width:13px;height:13px;border:1px solid #707070;background:#fff;"></div>
<div class="tt" style="left:755px;top:300px;">Temperature</div>
<div style="left:881px;top:299px;width:13px;height:13px;border:1px solid #707070;background:#fff;"></div>
<div class="tt" style="left:897px;top:300px;">TeleScope</div>
<div style="left:739px;top:315px;width:13px;height:13px;border:1px solid #707070;background:#fff;"></div>
<div class="tt" style="left:755px;top:316px;">Pressure</div>
<div style="left:881px;top:315px;width:13px;height:13px;border:1px solid #707070;background:#fff;"></div>
<div class="tt" style="left:897px;top:316px;">Group 14</div>
<div style="left:739px;top:331px;width:13px;height:13px;border:1px solid #707070;background:#fff;"></div>
<div class="tt" style="left:755px;top:332px;">ACC</div>
<div style="left:881px;top:331px;width:13px;height:13px;border:1px solid #707070;background:#fff;"></div>
<div class="tt" style="left:897px;top:332px;">Group 15</div>
<div style="left:739px;top:347px;width:13px;height:13px;border:1px solid #707070;background:#fff;"></div>
<div class="tt" style="left:755px;top:348px;">Brake-Press</div>
<div style="left:881px;top:347px;width:13px;height:13px;border:1px solid #707070;background:#fff;"></div>
<div class="tt" style="left:897px;top:348px;">Group 16</div>
<div style="left:738px;top:369px;width:285px;height:16px;background:#f0f0f0;"></div>
<div style="left:755px;top:369px;width:126px;height:16px;background:#cdcdcd;"></div>
<svg style="left:738px;top:369px" width="285" height="16"><path d="M10.6 4.5 L6.2 8 L10.6 11.5" fill="none" stroke="#505050" stroke-width="2.1"/><path d="M274.6 4.5 L279 8 L274.6 11.5" fill="none" stroke="#505050" stroke-width="2.1"/></svg>
<div style="left:755px;top:649px;width:74px;height:24px;background:#f4f4f4;border:1px solid #d9d9d9;"></div>
<div class="tt" style="left:755px;top:656px;width:73px;text-align:center;color:#838383;">Aplicar</div>
<div style="left:0px;top:684px;width:1357px;height:19px;background:#f0f0f0;"></div>
<div style="left:223px;top:686px;width:1px;height:16px;background:#d0d0d0;"></div>
<div style="left:678px;top:686px;width:1px;height:16px;background:#d0d0d0;"></div>
<div style="left:1133px;top:686px;width:1px;height:16px;background:#d0d0d0;"></div>
<div class="st" style="left:-1px;top:689px">Full LogIn on COM7!!!</div>
<div class="st" style="left:228px;top:689px">Shadow setting:</div>
<div class="st" style="left:682px;top:689px">Event: C:\RACEDATA\2014\CNS\140905 IS CEV NAVARRA.14</div>
<div class="st" style="left:1137px;top:689px">Mastername: ___-Tiradasbanco-</div>
</body></html>
